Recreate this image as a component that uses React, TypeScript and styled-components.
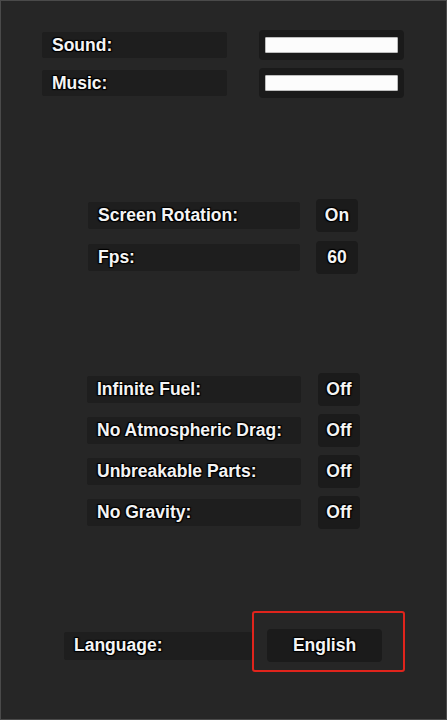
import React from "react";
import styled, { createGlobalStyle } from "styled-components";

const Global = createGlobalStyle`
  html, body { margin: 0; padding: 0; background: #262626; }
  body { font-family: "Liberation Sans", Arial, sans-serif; }
`;

const Panel = styled.div`
  box-sizing: border-box;
  width: 447px;
  height: 720px;
  background: #262626;
  border: 1px solid #4a4a4a;
  padding-top: 29px;
  display: flex;
  flex-direction: column;
`;

const Section = styled.div<{ $left: number; $top: number; $gap: number }>`
  display: flex;
  flex-direction: column;
  gap: ${(p) => p.$gap}px;
  margin-left: ${(p) => p.$left - 1}px;
  margin-top: ${(p) => p.$top}px;
`;

const Row = styled.div<{ $h: number; $gap: number }>`
  display: flex;
  align-items: center;
  height: ${(p) => p.$h}px;
  gap: ${(p) => p.$gap}px;
`;

const textOutline = `
  text-shadow: 0 0 1px #000, 1px 1px 1px #000, -1px -1px 1px #000, 1px -1px 1px #000, -1px 1px 1px #000;
`;

const Label = styled.div<{ $w: number; $h: number }>`
  box-sizing: border-box;
  width: ${(p) => p.$w}px;
  height: ${(p) => p.$h}px;
  background: #1e1e1e;
  border-radius: 2px;
  padding-left: 10px;
  display: flex;
  align-items: center;
  color: #f4f4f4;
  font-weight: bold;
  font-size: 17.5px;
  ${textOutline}
`;

const SliderBox = styled.div`
  box-sizing: border-box;
  width: 145px;
  height: 30px;
  background: #1a1a1a;
  border-radius: 4px;
  padding: 7px 6px;
  display: flex;
`;

const SliderBar = styled.div`
  flex: 1;
  background: #fcfcfc;
  border: 1px solid #bdbdbd;
  border-radius: 1px;
`;

const ValueBox = styled.div<{ $w: number }>`
  position: relative;
  box-sizing: border-box;
  width: ${(p) => p.$w}px;
  height: 33px;
  background: #1b1b1b;
  border-radius: 4px;
  display: flex;
  align-items: center;
  justify-content: center;
  color: #f4f4f4;
  font-weight: bold;
  font-size: 17.5px;
  ${textOutline}
`;

const Highlight = styled.div`
  position: absolute;
  top: -18px;
  left: -15px;
  right: -23px;
  bottom: -10px;
  border: 2px solid #e0241c;
  border-radius: 3px;
  pointer-events: none;
`;

const audio = ["Sound:", "Music:"];
const display = [
  { label: "Screen Rotation:", value: "On" },
  { label: "Fps:", value: "60" },
];
const cheats = [
  "Infinite Fuel:",
  "No Atmospheric Drag:",
  "Unbreakable Parts:",
  "No Gravity:",
];

export default function App() {
  return (
    <>
      <Global />
      <Panel>
        <Section $left={42} $top={0} $gap={8}>
          {audio.map((a) => (
            <Row key={a} $h={30} $gap={32}>
              <Label $w={185} $h={26}>{a}</Label>
              <SliderBox>
                <SliderBar />
              </SliderBox>
            </Row>
          ))}
        </Section>

        <Section $left={88} $top={101} $gap={9}>
          {display.map((d) => (
            <Row key={d.label} $h={33} $gap={16}>
              <Label $w={212} $h={27}>{d.label}</Label>
              <ValueBox $w={42}>{d.value}</ValueBox>
            </Row>
          ))}
        </Section>

        <Section $left={87} $top={99} $gap={8}>
          {cheats.map((c) => (
            <Row key={c} $h={33} $gap={17}>
              <Label $w={214} $h={27}>{c}</Label>
              <ValueBox $w={42}>Off</ValueBox>
            </Row>
          ))}
        </Section>

        <Section $left={64} $top={100} $gap={0}>
          <Row $h={33} $gap={15}>
            <Label $w={188} $h={28}>Language:</Label>
            <ValueBox $w={115}>
              English
              <Highlight />
            </ValueBox>
          </Row>
        </Section>
      </Panel>
    </>
  );
}
